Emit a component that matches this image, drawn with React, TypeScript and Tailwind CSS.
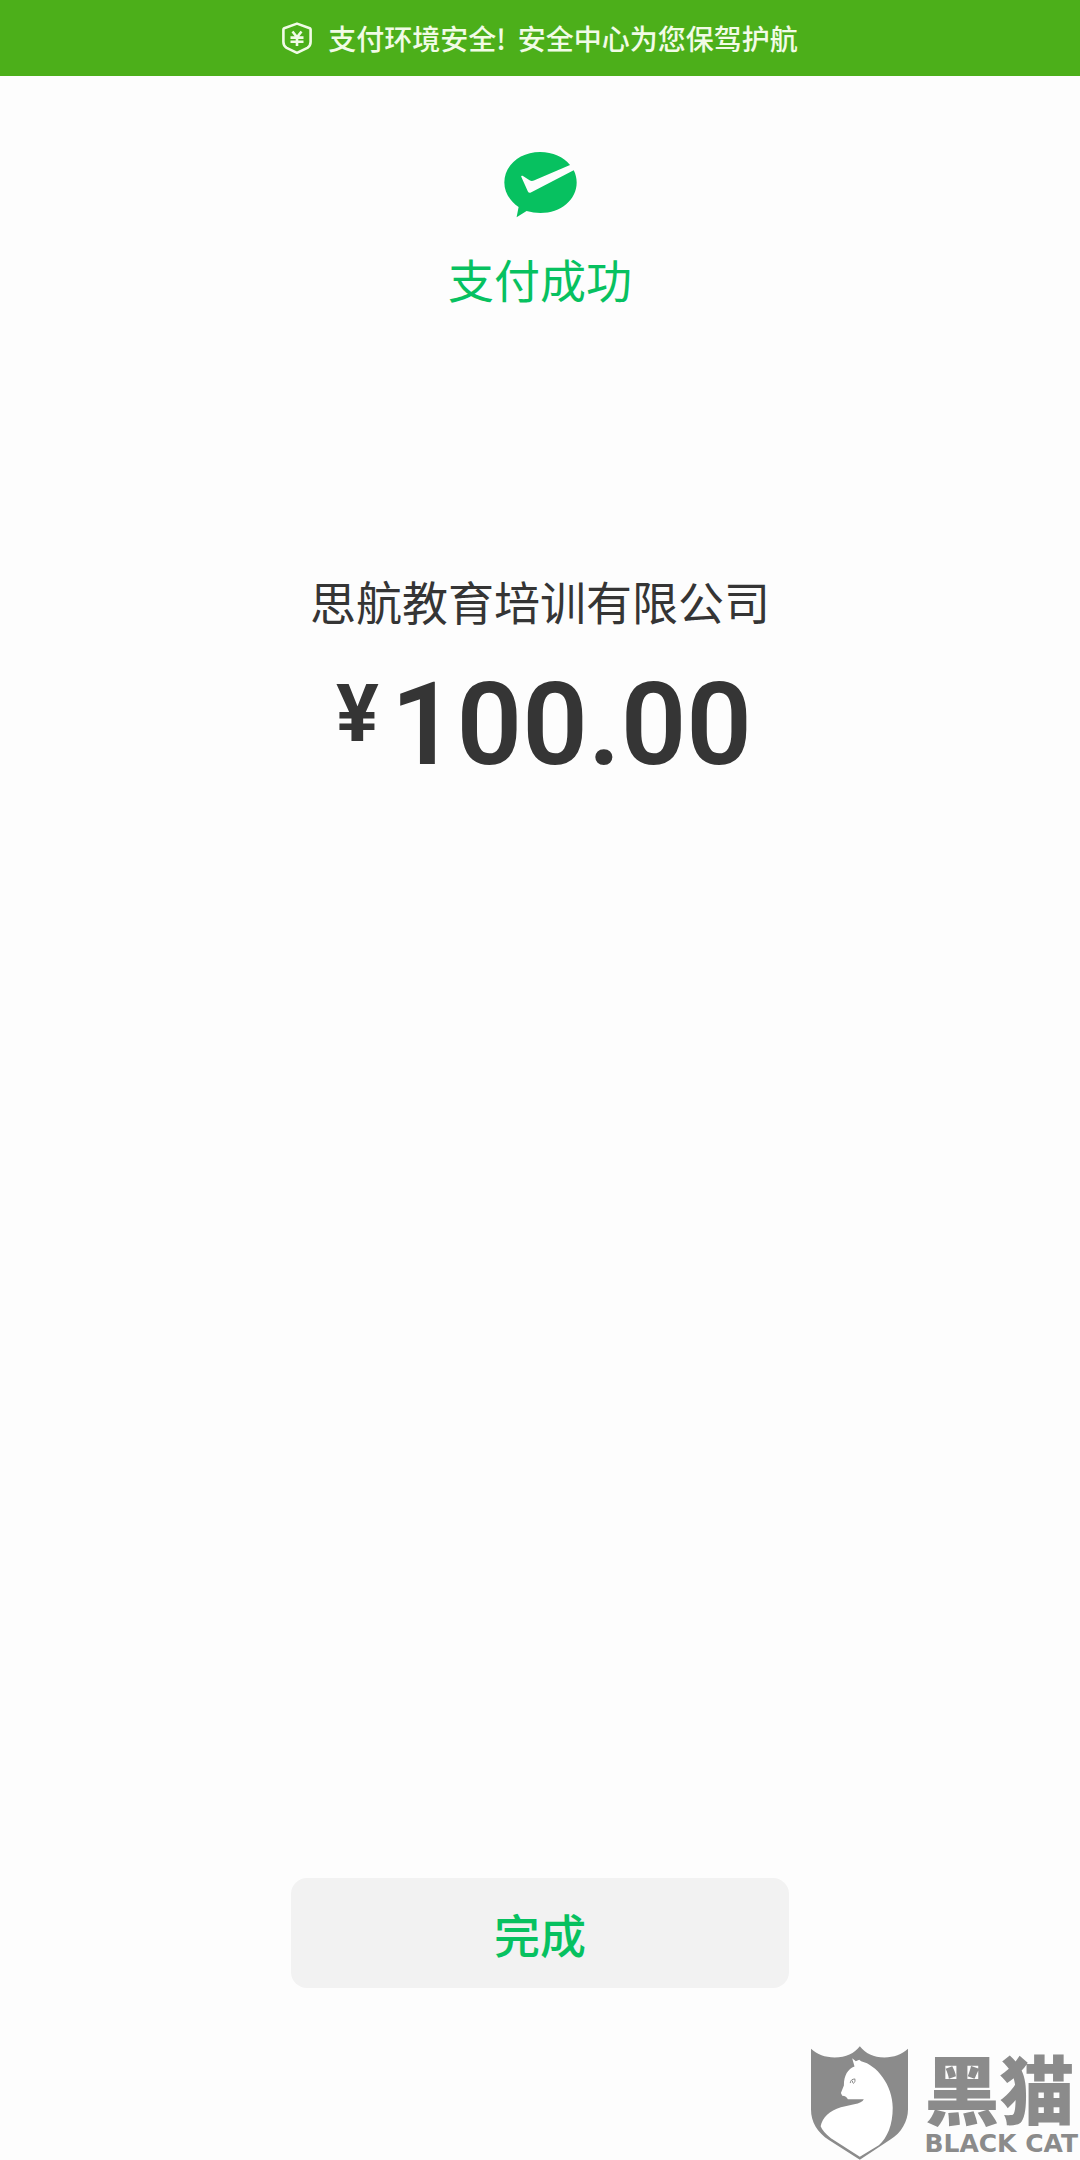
function ShieldYenIcon() {
  return (
    <svg viewBox="0 0 30 32" className="h-8 w-[30px]" fill="none" stroke="currentColor" aria-hidden="true">
      <path d="M15 1.6 27.8 6.2Q28.6 6.6 28.6 7.6V20Q28.6 23.8 25.4 25.8L15 30.8 4.6 25.8Q1.4 23.8 1.4 20V7.6Q1.4 6.6 2.2 6.2Z" strokeWidth="2.6" strokeLinejoin="round" />
      <path d="M10.5 9.5 15 15.2 19.5 9.5M15 15V24M8.5 15.6H21.5M8.5 19.8H21.5" strokeWidth="2.6" />
    </svg>
  );
}

function PaidIcon() {
  return (
    <svg viewBox="0 0 220 200" className="h-[67px] w-[73px]" aria-hidden="true">
      <path
        fill="#07c160"
        d="M109 2C48 2 1 42 1 94C1 125 20 152 44 168L38 199L68 180C82 184 96 186 110 186C171 186 219 146 219 94C219 81 216 68 210 57L81 124Q75 127 72 121L52 77Q51 72 56 74L77 87Q83 91 90 88L199 41C179 17 147 2 109 2Z"
      />
    </svg>
  );
}

function CatShield() {
  return (
    <svg viewBox="33 45 292 342" className="h-[114px] w-[97px]" aria-hidden="true">
      <path
        fill="#8b8b8b"
        d="M33 53C52 70 75 79 104 79C139 79 163 66 180 45C197 66 221 79 254 79C283 79 306 70 325 53V235C325 271 305 306 272 326L180 387L88 328C51 305 33 273 33 235Z"
      />
      <path
        fill="#fff"
        d="M157 81L168 90L178 86L184 90C231 101 279 162 279 230C279 282 263 320 237 343L180 378L93 322Q68 302 62 286C68 260 88 240 123 229L163 220Q187 216 192 205H144Q140 195 127 194L123 186L132 163C132 133 144 113 164 106Z"
      />
      <path fill="none" stroke="#8b8b8b" strokeWidth="3" d="M151 156Q153 143 165 144M165 143Q168 151 161 157Q156 155 158 149" />
    </svg>
  );
}

function Watermark() {
  return (
    <div className="absolute right-0 bottom-0 flex items-end gap-4 pr-0.5 text-[#8b8b8b]">
      <CatShield />
      <div className="flex flex-col items-start">
        <span className="text-[75px] leading-[82px] font-black">黑猫</span>
        <span className="font-['DejaVu_Sans',sans-serif] text-[25px] leading-8 font-bold">BLACK CAT</span>
      </div>
    </div>
  );
}

export default function App() {
  return (
    <div className="relative flex min-h-screen flex-col bg-[#fdfdfd] font-['Noto_Sans_CJK_SC',sans-serif]">
      <header className="flex h-[76px] items-center justify-center gap-4 bg-[#4caf1a] text-[28px] leading-10 font-medium text-[#f1fbe6]">
        <ShieldYenIcon />
        <p className="flex gap-3">
          <span>支付环境安全!</span>
          <span>安全中心为您保驾护航</span>
        </p>
      </header>

      <main className="flex flex-1 flex-col items-center pt-[75px] pb-[172px]">
        <PaidIcon />
        <h1 className="mt-7 text-[46px] leading-16 text-[#07c160]">支付成功</h1>
        <p className="mt-[258px] text-[46px] leading-16 text-[#353535]">思航教育培训有限公司</p>
        <p className="mt-10 flex items-start gap-3 pl-2 font-['Roboto',sans-serif] text-[#353535]">
          <span className="text-[80px] leading-[84px] font-bold">¥</span>
          <span className="text-[115px] leading-[106px] font-semibold">100.00</span>
        </p>
        <button type="button" className="mt-auto h-[110px] w-[498px] rounded-2xl bg-[#f2f2f2] text-[46px] font-medium text-[#07c160]">
          完成
        </button>
      </main>

      <Watermark />
    </div>
  );
}
